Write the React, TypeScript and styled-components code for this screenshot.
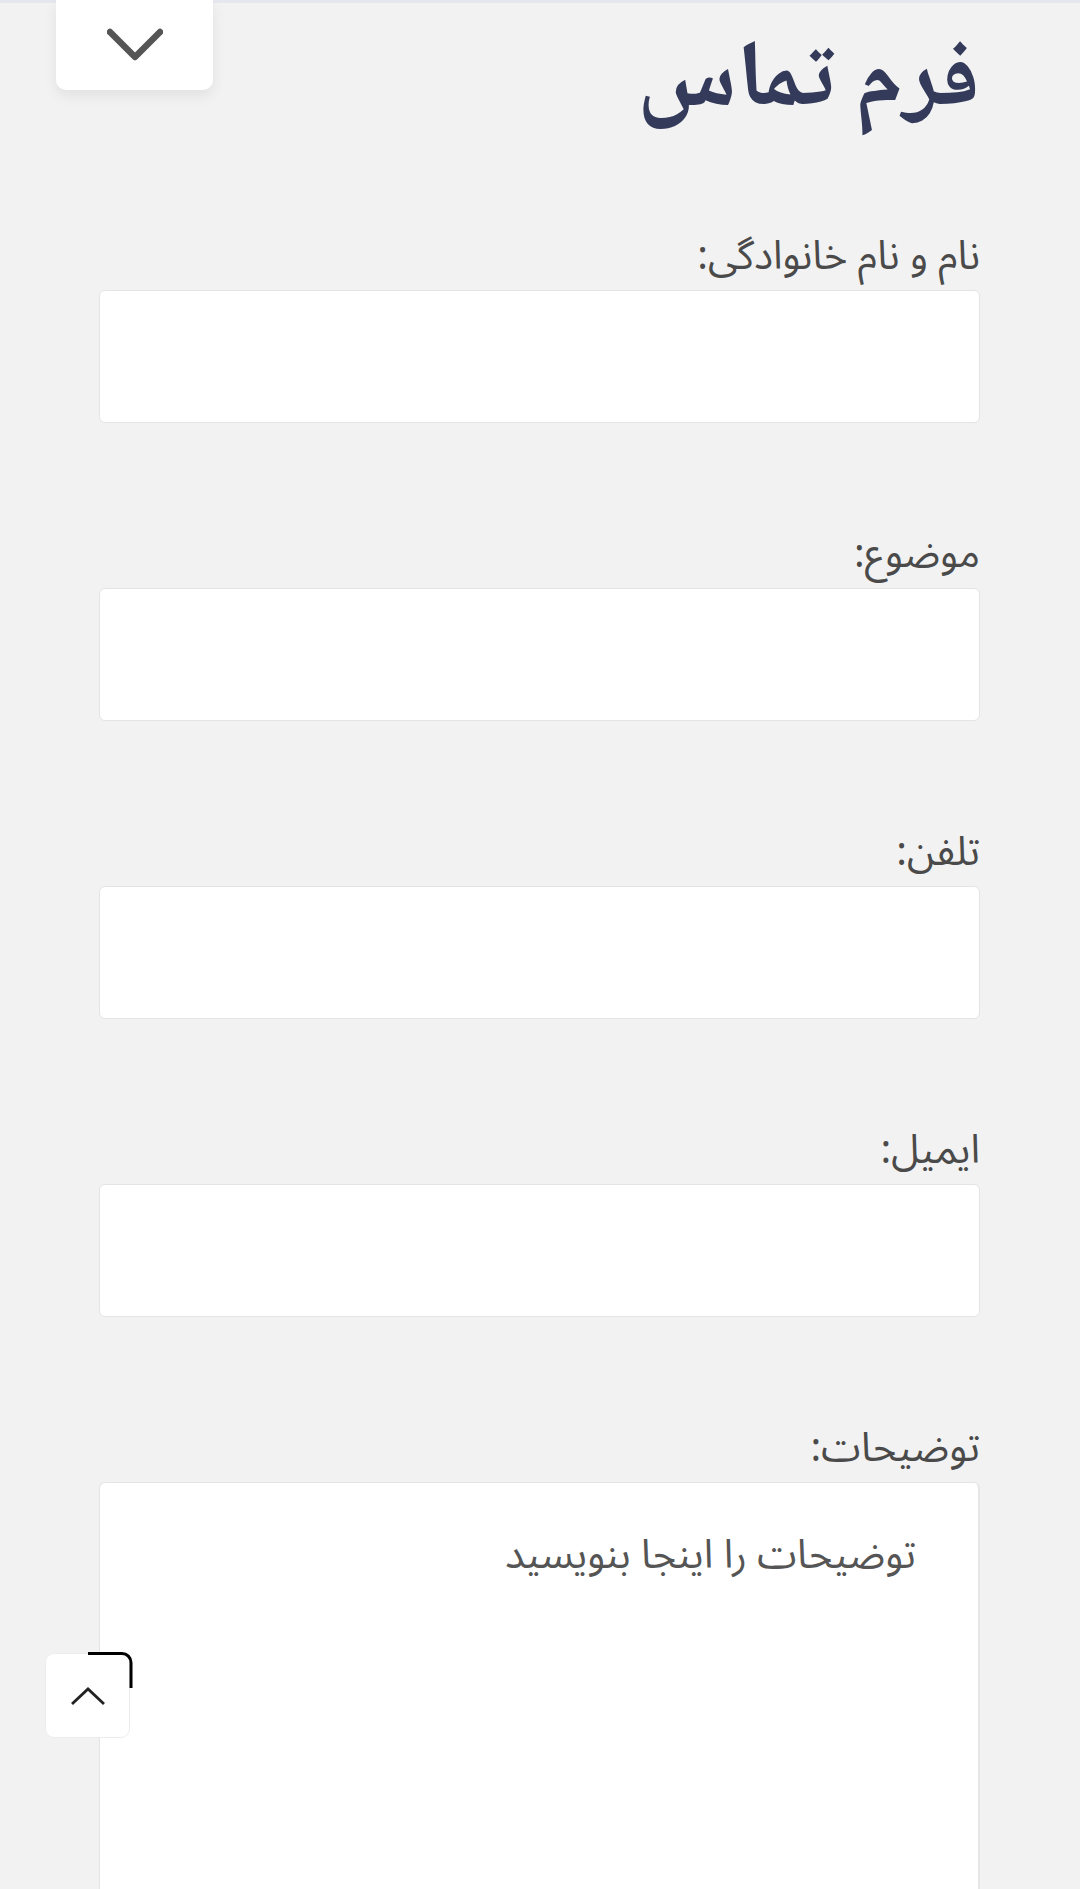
import React from "react";
import styled, { createGlobalStyle } from "styled-components";

const Global = createGlobalStyle`
  html, body { margin: 0; padding: 0; background: #f2f2f2; }
  body { font-family: "Noto Sans Arabic", "Vazirmatn", "DejaVu Sans", sans-serif; }
  * { box-sizing: border-box; }
`;

const Page = styled.div`
  direction: rtl;
  min-height: 1889px;
  background: #f2f2f2;
  border-top: 3px solid #e6e6ef;
  position: relative;
`;

const Header = styled.header`
  display: flex;
  flex-direction: row;
  justify-content: space-between;
  align-items: flex-start;
  padding: 0 100px 0 56px;
  height: 230px;
`;

const Title = styled.h1`
  margin: 20px 0 0;
  font-family: "Noto Naskh Arabic", "Noto Sans Arabic", "DejaVu Sans", serif;
  font-weight: 700;
  font-size: 94px;
  line-height: 124px;
  color: #333a5a;
`;

const ToggleButton = styled.button`
  width: 157px;
  height: 90px;
  margin-top: -3px;
  border: none;
  background: #ffffff;
  border-radius: 0 0 10px 10px;
  box-shadow: 0 6px 14px rgba(0, 0, 0, 0.07);
  display: flex;
  align-items: center;
  justify-content: center;
  padding: 0;
  cursor: pointer;
`;

const Form = styled.form`
  display: flex;
  flex-direction: column;
  padding: 0 100px 0 99px;
`;

const Field = styled.div<{ $first?: boolean }>`
  display: flex;
  flex-direction: column;
  margin-top: ${(p) => (p.$first ? "0" : "108px")};
`;

const Label = styled.label`
  font-family: "Noto Sans Arabic", "Vazirmatn", "DejaVu Sans", sans-serif;
  font-size: 40px;
  line-height: 48px;
  color: #4a4a4a;
  margin-bottom: 9px;
  text-align: right;
`;

const Input = styled.input`
  height: 133px;
  width: 100%;
  background: #ffffff;
  border: 1px solid #e4e4e4;
  border-radius: 6px;
  outline: none;
  font-size: 32px;
  padding: 0 24px;
`;

const TextArea = styled.textarea`
  height: 420px;
  width: 100%;
  background: #ffffff;
  border: 1px solid #e4e4e4;
  border-right: 2px solid #e6e6e6;
  border-radius: 6px;
  outline: none;
  resize: none;
  font-family: "Noto Sans Arabic", "Vazirmatn", "DejaVu Sans", sans-serif;
  font-size: 40px;
  line-height: 54px;
  color: #555;
  padding: 46px 62px 0 24px;
  &::placeholder {
    color: #555555;
    opacity: 1;
  }
`;

const ScrollTop = styled.button`
  position: fixed;
  left: 45px;
  bottom: 151px;
  width: 85px;
  height: 85px;
  background: #ffffff;
  border: 1px solid #ececec;
  border-radius: 9px;
  display: flex;
  align-items: center;
  justify-content: center;
  padding: 0;
  cursor: pointer;
`;

const Progress = styled.svg`
  position: absolute;
  left: -1px;
  top: -2px;
  width: 88px;
  height: 88px;
  overflow: visible;
  pointer-events: none;
`;

const fields = ["نام و نام خانوادگی:", "موضوع:", "تلفن:", "ایمیل:"];

export default function App() {
  return (
    <>
      <Global />
      <Page>
        <Header>
          <Title>فرم تماس</Title>
          <ToggleButton type="button" aria-label="menu">
            <svg width="56" height="34" viewBox="0 0 56 34">
              <polyline
                points="3,4 28,29 53,4"
                fill="none"
                stroke="#555555"
                strokeWidth="6.5"
                strokeLinecap="round"
                strokeLinejoin="round"
              />
            </svg>
          </ToggleButton>
        </Header>
        <Form>
          {fields.map((f, i) => (
            <Field key={f} $first={i === 0}>
              <Label>{f}</Label>
              <Input type="text" />
            </Field>
          ))}
          <Field>
            <Label>توضیحات:</Label>
            <TextArea placeholder="توضیحات را اینجا بنویسید" />
          </Field>
        </Form>
        <ScrollTop type="button" aria-label="scroll to top">
          <svg width="36" height="20" viewBox="0 0 36 20">
            <polyline
              points="2,18 18,3 34,18"
              fill="none"
              stroke="#222222"
              strokeWidth="2.8"
            />
          </svg>
          <Progress viewBox="0 0 88 88">
            <path
              d="M43 1.5 H77 A9 9 0 0 1 86 10.5 V36"
              fill="none"
              stroke="#000000"
              strokeWidth="3"
            />
          </Progress>
        </ScrollTop>
      </Page>
    </>
  );
}
